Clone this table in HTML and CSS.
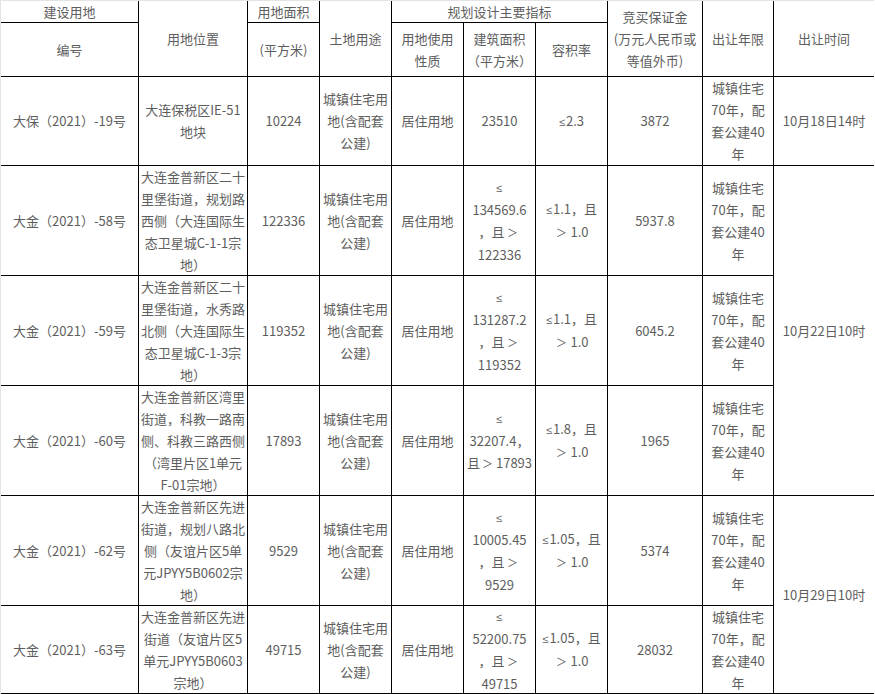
FILE: index.html
```html
<!DOCTYPE html>
<html lang="zh-CN">
<head>
<meta charset="utf-8">
<title>土地出让</title>
<link rel="stylesheet" href="styles.css">
</head>
<body>
<div class="grid">
  <div class="cell">建设用地</div>
  <div class="cell rs2">用地位置</div>
  <div class="cell">用地面积</div>
  <div class="cell rs2">土地用途</div>
  <div class="cell cs3">规划设计主要指标</div>
  <div class="cell rs2">竞买保证金<br>(万元人民币或<br>等值外币)</div>
  <div class="cell rs2">出让年限</div>
  <div class="cell rs2">出让时间</div>

  <div class="cell">编号</div>
  <div class="cell">(平方米)</div>
  <div class="cell">用地使用<br>性质</div>
  <div class="cell">建筑面积<br>（平方米）</div>
  <div class="cell">容积率</div>

  <div class="cell">大保（2021）-19号</div>
  <div class="cell">大连保税区IE-51<br>地块</div>
  <div class="cell">10224</div>
  <div class="cell">城镇住宅用<br>地(含配套<br>公建)</div>
  <div class="cell">居住用地</div>
  <div class="cell">23510</div>
  <div class="cell"><div class="in"><span class="le">≤</span>2.3</div></div>
  <div class="cell">3872</div>
  <div class="cell">城镇住宅<br>70年，配<br>套公建40<br>年</div>
  <div class="cell">10月18日14时</div>

  <div class="cell">大金（2021）-58号</div>
  <div class="cell">大连金普新区二十<br>里堡街道，规划路<br>西侧（大连国际生<br>态卫星城C-1-1宗<br>地）</div>
  <div class="cell">122336</div>
  <div class="cell">城镇住宅用<br>地(含配套<br>公建)</div>
  <div class="cell">居住用地</div>
  <div class="cell"><div class="in"><span class="le">≤</span><br>134569.6<br>，且<span class="gt">＞</span><br>122336</div></div>
  <div class="cell"><div class="in"><span class="le">≤</span>1.1，且<br><span class="gt">＞</span>1.0</div></div>
  <div class="cell">5937.8</div>
  <div class="cell">城镇住宅<br>70年，配<br>套公建40<br>年</div>
  <div class="cell rs3">10月22日10时</div>

  <div class="cell">大金（2021）-59号</div>
  <div class="cell">大连金普新区二十<br>里堡街道，水秀路<br>北侧（大连国际生<br>态卫星城C-1-3宗<br>地）</div>
  <div class="cell">119352</div>
  <div class="cell">城镇住宅用<br>地(含配套<br>公建)</div>
  <div class="cell">居住用地</div>
  <div class="cell"><div class="in"><span class="le">≤</span><br>131287.2<br>，且<span class="gt">＞</span><br>119352</div></div>
  <div class="cell"><div class="in"><span class="le">≤</span>1.1，且<br><span class="gt">＞</span>1.0</div></div>
  <div class="cell">6045.2</div>
  <div class="cell">城镇住宅<br>70年，配<br>套公建40<br>年</div>

  <div class="cell">大金（2021）-60号</div>
  <div class="cell">大连金普新区湾里<br>街道，科教一路南<br>侧、科教三路西侧<br>（湾里片区1单元<br>F-01宗地）</div>
  <div class="cell">17893</div>
  <div class="cell">城镇住宅用<br>地(含配套<br>公建)</div>
  <div class="cell">居住用地</div>
  <div class="cell"><div class="in"><span class="le">≤</span><br>32207.4，<br>且<span class="gt">＞</span>17893</div></div>
  <div class="cell"><div class="in"><span class="le">≤</span>1.8，且<br><span class="gt">＞</span>1.0</div></div>
  <div class="cell">1965</div>
  <div class="cell">城镇住宅<br>70年，配<br>套公建40<br>年</div>

  <div class="cell">大金（2021）-62号</div>
  <div class="cell">大连金普新区先进<br>街道，规划八路北<br>侧（友谊片区5单<br>元JPYY5B0602宗<br>地）</div>
  <div class="cell">9529</div>
  <div class="cell">城镇住宅用<br>地(含配套<br>公建)</div>
  <div class="cell">居住用地</div>
  <div class="cell"><div class="in"><span class="le">≤</span><br>10005.45<br>，且<span class="gt">＞</span><br>9529</div></div>
  <div class="cell"><div class="in"><span class="le">≤</span>1.05，且<br><span class="gt">＞</span>1.0</div></div>
  <div class="cell">5374</div>
  <div class="cell">城镇住宅<br>70年，配<br>套公建40<br>年</div>
  <div class="cell rs2">10月29日10时</div>

  <div class="cell">大金（2021）-63号</div>
  <div class="cell">大连金普新区先进<br>街道（友谊片区5<br>单元JPYY5B0603<br>宗地）</div>
  <div class="cell">49715</div>
  <div class="cell">城镇住宅用<br>地(含配套<br>公建)</div>
  <div class="cell">居住用地</div>
  <div class="cell"><div class="in"><span class="le">≤</span><br>52200.75<br>，且<span class="gt">＞</span><br>49715</div></div>
  <div class="cell"><div class="in"><span class="le">≤</span>1.05，且<br><span class="gt">＞</span>1.0</div></div>
  <div class="cell">28032</div>
  <div class="cell">城镇住宅<br>70年，配<br>套公建40<br>年</div>
</div>
</body>
</html>
```

FILE: styles.css
```css
html, body {
  margin: 0;
  padding: 0;
  background: #ffffff;
}

.grid {
  display: grid;
  grid-template-columns: 137px 108px 71px 71px 71px 71px 71px 94px 70px 100px;
  grid-template-rows: 21px 53px 88px 109px 109px 109px 109px 87px;
  gap: 1px;
  width: 874px;
  box-sizing: border-box;
  background: #000000;
  border-left: 1px solid #e4e4e4;
  border-top: 1px solid #e4e4e4;
  padding: 0 1px 1px 0;
  font-family: "Microsoft YaHei", "Noto Sans CJK SC", "Noto Sans", sans-serif;
  font-size: 13px;
  line-height: 22px;
  color: #5e5e5e;
}

.cell {
  background: #ffffff;
  display: flex;
  align-items: center;
  justify-content: center;
  text-align: center;
  white-space: nowrap;
  overflow: visible;
}

.in {
  text-align: center;
}

.le {
  font-family: "Liberation Sans", "DejaVu Sans", sans-serif;
  font-size: 11px;
  margin-right: 1px;
}

.gt {
  font-family: "Liberation Sans", "DejaVu Sans", sans-serif;
  font-size: 11px;
  margin: 0 3px 0 2px;
}

.rs2 { grid-row: span 2; }
.rs3 { grid-row: span 3; }
.cs3 { grid-column: span 3; }
```
